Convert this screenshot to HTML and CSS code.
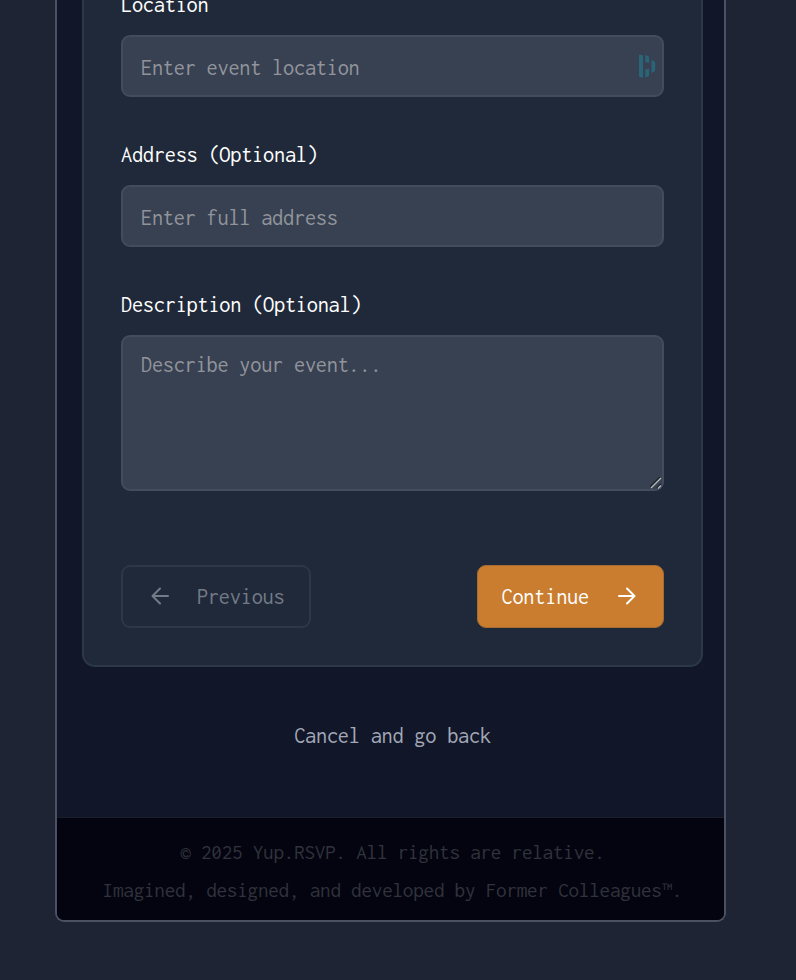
FILE: index.html
```html
<!DOCTYPE html>
<html lang="en">
<head>
<meta charset="utf-8">
<title>Yup.RSVP</title>
<link rel="stylesheet" href="styles.css">
</head>
<body>
<div class="panel">
  <main class="main">
    <form class="card">
      <div class="field">
        <label class="label" for="location">Location</label>
        <div class="input-wrap">
          <input class="control" id="location" placeholder="Enter event location">
          <svg class="autofill" viewBox="0 0 17 24" width="17" height="24"><path d="M0 1.500Q0 .5 1 .5L4 1.500V23Q4 24 3 23.700L0 22.500zM6.300 1 9 2Q10 2.300 10 3.500V9L6.300 8zM6.300 15.500l3.700-1V21Q10 22 9 22.500L6.300 23.500zM12.500 6l2.700 1.300Q16.200 8 16.200 9v7q0 1-1 1.500L12.500 19z"/></svg>
        </div>
      </div>
      <div class="field">
        <label class="label" for="address">Address (Optional)</label>
        <input class="control" id="address" placeholder="Enter full address">
      </div>
      <div class="field">
        <label class="label" for="description">Description (Optional)</label>
        <div class="input-wrap">
          <textarea class="control area" id="description" placeholder="Describe your event..."></textarea>
          <svg class="grip" viewBox="0 0 12 12" width="12" height="12"><path class="grip-dark" d="M0 10 10 0M7 11l4-4"/><path class="grip-light" d="M1 11 11 1M8 11.500l3-3"/></svg>
        </div>
      </div>
      <div class="actions">
        <button type="button" class="btn previous"><svg viewBox="0 0 18 18" width="18" height="18"><path d="M17 9H1.500M9 1.500 1.500 9 9 16.500"/></svg><span>Previous</span></button>
        <button type="button" class="btn continue"><span>Continue</span><svg viewBox="0 0 18 18" width="18" height="18"><path d="M1 9h15.500M9 1.500 16.500 9 9 16.500"/></svg></button>
      </div>
    </form>
    <a class="cancel">Cancel and go back</a>
  </main>
  <footer class="footer">
    <div>© 2025 Yup.RSVP. All rights are relative.</div>
    <div>Imagined, designed, and developed by Former Colleagues™.</div>
  </footer>
</div>
</body>
</html>
```
FILE: styles.css
```css
* { box-sizing: border-box; }
body {
  margin: 0;
  height: 980px;
  overflow: hidden;
  background: #1e2433;
  color: #fff;
  font: 22.4px/34px Inconsolata, "Noto Sans Mono CJK SC", "DejaVu Sans Mono", monospace;
  letter-spacing: -0.27px;
}
.panel {
  display: flex;
  flex-direction: column;
  width: 671px;
  height: 922px;
  margin-left: 55px;
  border: 2px solid #4b5163;
  border-top: 0;
  border-radius: 0 0 9px 9px;
  background: #111628;
  overflow: hidden;
}
.main { flex: 1; display: flex; flex-direction: column; padding: 0 21px 0 25px; }
.card {
  height: 667px;
  margin: 0;
  padding: 0 37px;
  border: 2px solid #2c3747;
  border-top: 0;
  border-radius: 0 0 13px 13px;
  background: #202939;
}
.field { display: flex; flex-direction: column; gap: 15px; margin-bottom: 41px; }
.field:first-child { margin-top: -12px; }
.label { display: block; height: 32px; white-space: nowrap; }
.input-wrap { position: relative; display: flex; }
.control {
  display: block;
  width: 100%;
  height: 62px;
  margin: 0;
  padding: 2px 18px 0;
  border: 2px solid #414c5e;
  border-radius: 9px;
  background: #374151;
  color: #fff;
  font: inherit;
  letter-spacing: inherit;
  outline: 0;
}
.control::placeholder { color: #92949c; opacity: 1; }
.area { height: 156px; padding-top: 11px; resize: none; }
.autofill { position: absolute; right: 8px; top: 19px; fill: #2a6478; }
.grip { position: absolute; right: 2px; bottom: 2px; fill: none; }
.grip-dark { stroke: #1b222c; stroke-width: 1.5; }
.grip-light { stroke: #b5b9b9; stroke-width: 1.4; }
.actions { display: flex; justify-content: space-between; margin-top: 74px; }
.btn {
  display: flex;
  align-items: center;
  height: 63px;
  padding: 0 0 1px;
  border: 2px solid #2e3747;
  border-radius: 9px;
  background: transparent;
  color: #737b88;
  font: inherit;
  letter-spacing: inherit;
}
.btn span { padding-top: 2px; }
.btn svg { fill: none; stroke: currentColor; stroke-width: 2; stroke-linecap: round; stroke-linejoin: round; }
.previous { width: 190px; padding-left: 28px; gap: 28px; }
.continue { width: 187px; padding-left: 23.5px; gap: 29px; border: 1px solid #a56d35; background: #ca7d2f; color: #fff; }
.cancel { margin-top: 52px; text-align: center; color: #a2a8b7; }
.footer {
  height: 103px;
  padding: 15px 0 0 4px;
  border-top: 1px solid #1a202b;
  background: #03040f;
  color: #30323c;
  font-size: 21.2px;
  letter-spacing: -0.24px;
  line-height: 38px;
  text-align: center;
  white-space: nowrap;
}
```
